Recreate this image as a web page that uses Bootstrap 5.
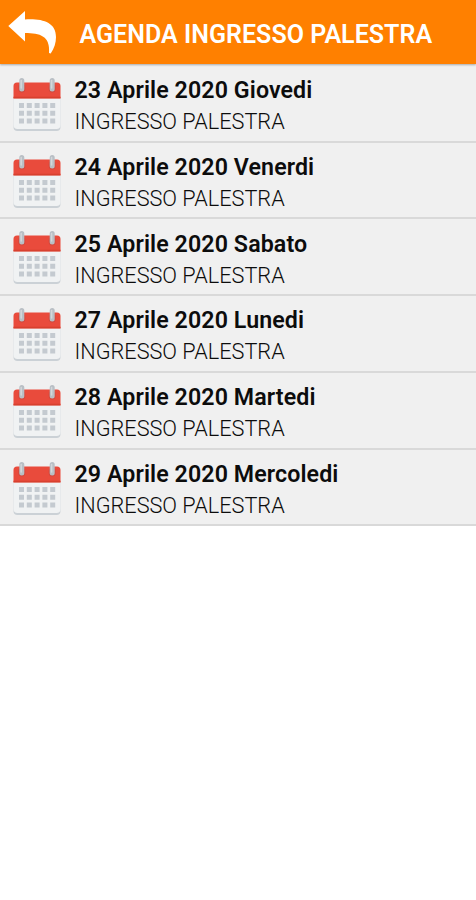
<!DOCTYPE html>
<html lang="it">
<head>
<meta charset="utf-8">
<meta name="viewport" content="width=device-width, initial-scale=1">
<title>Agenda ingresso palestra</title>
<link href="https://cdn.jsdelivr.net/npm/bootstrap@5.3.0/dist/css/bootstrap.min.css" rel="stylesheet">
<style>
body { font-family: Roboto, sans-serif; background: #fff; }
.topbar { height: 63.5px; background: #ff8000; box-shadow: 0 1px 2px rgba(0,0,0,.3); z-index: 1; }
.back-btn { width: 50px; height: 46px; margin: 0 22.5px 0 7px; }
.page-title { font-size: 25px; font-weight: 600; letter-spacing: .04px; line-height: 30px; padding-top: 6.5px; white-space: nowrap; }
.agenda-list .agenda-row { height: 76.8px; background: #f0f0f0; border: 0; border-bottom: 2px solid #d9d9d9; }
.agenda-list .agenda-row:first-child { height: 79px; padding-top: 2.2px !important; }
.cal-icon { width: 50px; height: 56px; margin: 11px 12.5px 0 12px; }
.entry { padding-top: 9.3px; white-space: nowrap; color: #0c0c0c; }
.entry-date { font-size: 23.2px; font-weight: 600; letter-spacing: .1px; line-height: 31px; }
.entry-kind { font-size: 21.7px; font-weight: 300; line-height: 31px; }
</style>
</head>
<body>
<svg class="d-none" xmlns="http://www.w3.org/2000/svg">
  <symbol id="calendar" viewBox="0 0 50 56">
    <path d="M1.500 21h47v29a4 4 0 0 1-4 4h-39a4 4 0 0 1-4-4z" fill="#cbd1d6"/>
    <path d="M1.500 20h47v28a4 4 0 0 1-4 4h-39a4 4 0 0 1-4-4z" fill="#f0f2f3"/>
    <path d="M5 5.500h40a3.500 3.500 0 0 1 3.500 3.500v12.300h-47V9A3.500 3.500 0 0 1 5 5.500z" fill="#e94b3c"/>
    <path d="M1.500 19.800h47v1.700h-47z" fill="#d8402f"/>
    <g fill="#c4cad0">
      <path id="dayrow" d="M7 26h5v5H7zm7.800 0h5v5h-5zm7.800 0h5v5h-5zm7.800 0h5v5h-5zm7.800 0h5v5h-5z"/>
      <use href="#dayrow" y="7.800"/><use href="#dayrow" y="15.600"/>
    </g>
    <g stroke-linecap="round" fill="none">
      <path d="M9.800 10v2M40.200 10v2" stroke="#d2493e" stroke-width="7"/>
      <path d="M9.800 3.500v8.500M40.200 3.500v8.500" stroke="#b9bfc5" stroke-width="5"/>
      <path d="M9.200 3.500v7.500M39.600 3.500v7.500" stroke="#d3d7da" stroke-width="1.500"/>
    </g>
  </symbol>
</svg>
<header class="topbar position-relative d-flex align-items-center text-white">
  <a href="#" class="back-btn d-block flex-shrink-0 text-white lh-1" aria-label="Indietro">
    <svg class="d-block" width="50" height="46" viewBox="0 0 50 46"><path d="M1.300 17 18 2v8.500C35 9.500 49 13 49 28c0 6-1.700 11-5.300 16.500-.5 0-1.200-.1-1.700-.4C43.500 27 33 24 18 24v8.500z" fill="#fff"/></svg>
  </a>
  <h1 class="page-title mb-0">AGENDA INGRESSO PALESTRA</h1>
</header>
<main class="list-group agenda-list rounded-0">
  <a href="#" class="list-group-item agenda-row rounded-0 d-flex p-0"><svg class="cal-icon flex-shrink-0"><use href="#calendar"/></svg><div class="entry"><div class="entry-date"><span>23 Aprile 2020 Giovedi</span></div><div class="entry-kind"><span>INGRESSO PALESTRA</span></div></div></a>
  <a href="#" class="list-group-item agenda-row rounded-0 d-flex p-0"><svg class="cal-icon flex-shrink-0"><use href="#calendar"/></svg><div class="entry"><div class="entry-date"><span>24 Aprile 2020 Venerdi</span></div><div class="entry-kind"><span>INGRESSO PALESTRA</span></div></div></a>
  <a href="#" class="list-group-item agenda-row rounded-0 d-flex p-0"><svg class="cal-icon flex-shrink-0"><use href="#calendar"/></svg><div class="entry"><div class="entry-date"><span>25 Aprile 2020 Sabato</span></div><div class="entry-kind"><span>INGRESSO PALESTRA</span></div></div></a>
  <a href="#" class="list-group-item agenda-row rounded-0 d-flex p-0"><svg class="cal-icon flex-shrink-0"><use href="#calendar"/></svg><div class="entry"><div class="entry-date"><span>27 Aprile 2020 Lunedi</span></div><div class="entry-kind"><span>INGRESSO PALESTRA</span></div></div></a>
  <a href="#" class="list-group-item agenda-row rounded-0 d-flex p-0"><svg class="cal-icon flex-shrink-0"><use href="#calendar"/></svg><div class="entry"><div class="entry-date"><span>28 Aprile 2020 Martedi</span></div><div class="entry-kind"><span>INGRESSO PALESTRA</span></div></div></a>
  <a href="#" class="list-group-item agenda-row rounded-0 d-flex p-0"><svg class="cal-icon flex-shrink-0"><use href="#calendar"/></svg><div class="entry"><div class="entry-date"><span>29 Aprile 2020 Mercoledi</span></div><div class="entry-kind"><span>INGRESSO PALESTRA</span></div></div></a>
</main>
<script src="https://cdn.jsdelivr.net/npm/bootstrap@5.3.0/dist/js/bootstrap.bundle.min.js"></script>
</body>
</html>
